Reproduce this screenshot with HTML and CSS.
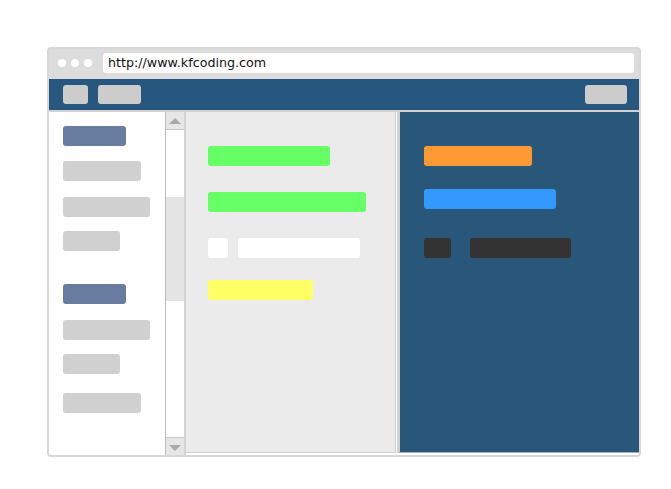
FILE: index.html
```html
<!DOCTYPE html>
<html lang="en">

<head>
    <meta charset="UTF-8">
    <title>kfcoding</title>
    <link rel="stylesheet" href="styles.css">
</head>

<body>
    <div class="browser">
        <!-- 地址栏 -->
        <div class="titlebar">
            <span class="dot"></span>
            <span class="dot"></span>
            <span class="dot"></span>
            <div class="url">http://www.kfcoding.com</div>
        </div>
        <!-- 顶部导航 -->
        <nav class="topnav">
            <span class="btn small"></span>
            <span class="btn wide"></span>
            <span class="btn right"></span>
        </nav>
        <div class="main">
            <!-- 侧栏 -->
            <aside class="sidebar">
                <span class="bar blue w63"></span>
                <span class="bar grey w78"></span>
                <span class="bar grey w87"></span>
                <span class="bar grey w57"></span>
                <span class="bar blue w63 group"></span>
                <span class="bar grey w87"></span>
                <span class="bar grey w57"></span>
                <span class="bar grey w78 last"></span>
            </aside>
            <div class="scrollbar">
                <div class="arrow up"></div>
                <div class="track">
                    <div class="thumb"></div>
                </div>
                <div class="arrow down"></div>
            </div>
            <!-- 编辑区 -->
            <section class="editor">
                <span class="bar green w122"></span>
                <span class="bar green w158"></span>
                <div class="row">
                    <span class="bar white w20"></span>
                    <span class="bar white w122"></span>
                </div>
                <span class="bar yellow w105"></span>
            </section>
            <!-- 预览区 -->
            <section class="preview">
                <span class="bar orange w108"></span>
                <span class="bar sky w132"></span>
                <div class="row">
                    <span class="bar dark w27"></span>
                    <span class="bar dark w101"></span>
                </div>
            </section>
        </div>
    </div>
</body>

</html>
```

FILE: styles.css
```css
* {
    box-sizing: border-box;
}

body {
    margin: 0;
    background: #fff;
    font-family: "DejaVu Sans", sans-serif;
}

.browser {
    width: 594px;
    height: 410px;
    margin: 47px 0 0 47px;
    border: 2px solid #d8d8d8;
    border-radius: 4px;
    background: #fff;
    display: flex;
    flex-direction: column;
}

.titlebar {
    height: 30px;
    background: #dcdcdc;
    display: flex;
    align-items: center;
    padding: 0 5px 2px 9px;
}

.dot {
    width: 8px;
    height: 8px;
    border-radius: 50%;
    background: #fff;
    margin-right: 5px;
}

.url {
    flex: 1;
    height: 20px;
    margin-left: 6px;
    padding-left: 5px;
    background: #fff;
    border-radius: 3px;
    font-size: 12.7px;
    line-height: 20px;
    color: #111;
}

.topnav {
    height: 33px;
    background: #27567f;
    border-bottom: 2px solid #d2d2d2;
    display: flex;
    align-items: flex-start;
    padding: 6px 12px 0 14px;
}

.btn {
    height: 19px;
    background: #cccccc;
    border-radius: 3px;
}

.btn.small {
    width: 25px;
}

.btn.wide {
    width: 43px;
    margin-left: 10px;
}

.btn.right {
    width: 42px;
    margin-left: auto;
}

.main {
    flex: 1;
    display: flex;
    min-height: 0;
}

.bar {
    display: block;
    height: 20px;
    border-radius: 3px;
}

.sidebar {
    width: 116px;
    padding: 14px 0 0 14px;
}

.sidebar .bar {
    margin-bottom: 15px;
}

.sidebar .bar:nth-child(2),
.sidebar .bar:nth-child(5) {
    margin-bottom: 16px;
}

.sidebar .bar:nth-child(3),
.sidebar .bar:nth-child(6) {
    margin-bottom: 14px;
}

.sidebar .bar:nth-child(4) {
    margin-bottom: 33px;
}

.sidebar .bar:nth-child(7) {
    margin-bottom: 19px;
}

.blue {
    background: #687ca0;
}

.grey {
    background: #d0d0d0;
}

.green {
    background: #66ff66;
}

.white {
    background: #fff;
}

.yellow {
    background: #ffff66;
}

.orange {
    background: #ff9933;
}

.sky {
    background: #3399ff;
}

.dark {
    background: #333;
}

.w20 { width: 20px; }
.w27 { width: 27px; }
.w57 { width: 57px; }
.w63 { width: 63px; }
.w78 { width: 78px; }
.w87 { width: 87px; }
.w101 { width: 101px; }
.w105 { width: 105px; }
.w108 { width: 108px; }
.w122 { width: 122px; }
.w132 { width: 132px; }
.w158 { width: 158px; }

.scrollbar {
    width: 21px;
    border-left: 1px solid #bdbdbd;
    border-right: 2px solid #d4d4d4;
    display: flex;
    flex-direction: column;
}

.arrow {
    height: 18px;
    background: #e6e6e6;
    position: relative;
}

.arrow.up {
    border-bottom: 1px solid #c8c8c8;
}

.arrow.down {
    border-top: 1px solid #c8c8c8;
}

.arrow::after {
    content: "";
    position: absolute;
    left: 3px;
    top: 6px;
    border-left: 6px solid transparent;
    border-right: 6px solid transparent;
}

.arrow.up::after {
    border-bottom: 6px solid #a9a9a9;
}

.arrow.down::after {
    top: 7px;
    border-top: 6px solid #a9a9a9;
}

.track {
    flex: 1;
    background: #fff;
    padding-top: 67px;
}

.thumb {
    height: 104px;
    background: #e4e4e4;
}

.editor {
    width: 210px;
    margin-bottom: 2px;
    background: #ebebeb;
    border-right: 1px solid #cfcfcf;
    border-bottom: 1px solid #cfcfcf;
    padding: 34px 0 0 22px;
}

.editor > .bar,
.editor > .row {
    margin-bottom: 26px;
}

.editor > .row {
    margin-bottom: 22px;
}

.row {
    display: flex;
}

.editor .row .bar + .bar {
    margin-left: 10px;
}

.preview {
    flex: 1;
    margin: 0 0 2px 1px;
    background: #28577a;
    border-left: 3px solid #d0d0d0;
    border-bottom: 1px solid #9fb0c0;
    padding: 34px 0 0 24px;
}

.preview > .bar:nth-child(1) {
    margin-bottom: 23px;
}

.preview > .bar:nth-child(2) {
    margin-bottom: 29px;
}

.preview .row .bar + .bar {
    margin-left: 19px;
}
```
